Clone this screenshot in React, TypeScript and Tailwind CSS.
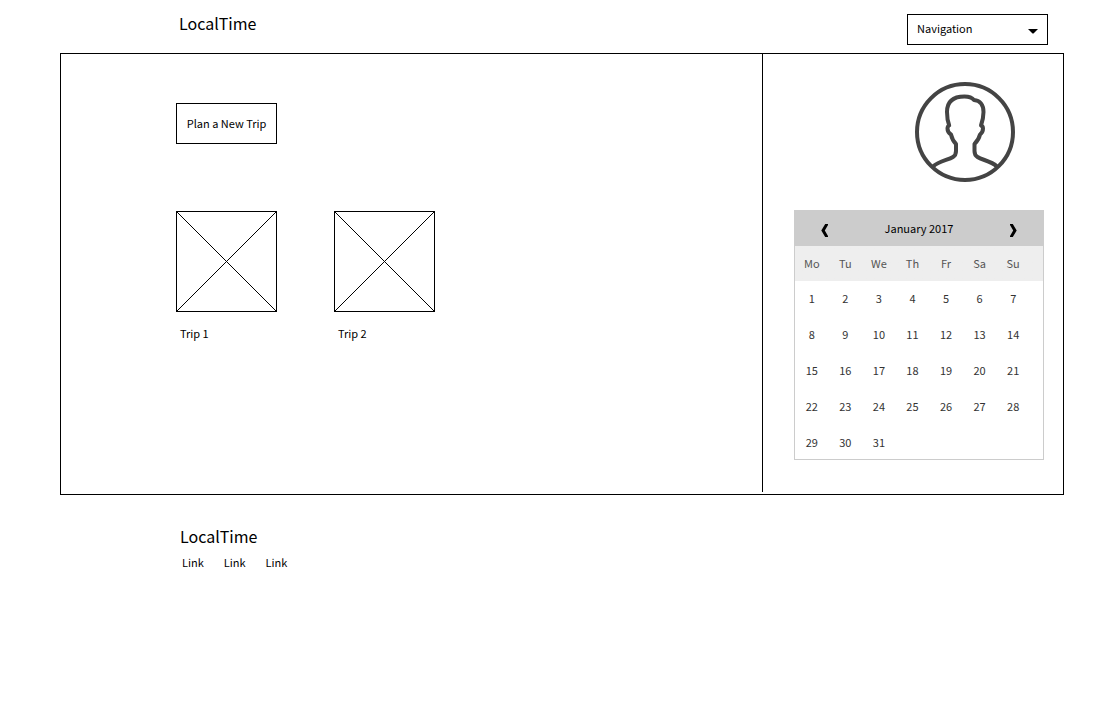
import React from "react";

const weekdays = ["Mo", "Tu", "We", "Th", "Fr", "Sa", "Su"];
const weeks = [0, 1, 2, 3, 4].map((w) =>
  weekdays.map((_, d) => w * 7 + d + 1).map((n) => (n <= 31 ? n : null)),
);

function Trip({ name }: { name: string }) {
  return (
    <figure>
      <svg
        className="size-[101px] border border-black"
        viewBox="0 0 99 99"
        fill="none"
        stroke="#000"
        shapeRendering="crispEdges"
        role="img"
        aria-label={name}
      >
        <path d="M0 0L99 99M99 0L0 99" />
      </svg>
      <figcaption className="mt-[11px] pl-1 leading-5">{name}</figcaption>
    </figure>
  );
}

function Avatar() {
  return (
    <svg
      className="mr-12 size-[100px] self-end"
      viewBox="0 0 100 100"
      fill="none"
      stroke="#444"
      strokeWidth="4"
      strokeLinejoin="round"
      role="img"
      aria-label="Profile"
    >
      <circle cx="50" cy="50" r="48" />
      <path d="M18 84.500C24 79 33 78 38 75C40.500 73.500 41 71 41 69V62C38.500 59.500 37 57 36 52.500C33.500 51 32.500 49 32.500 46.500C32.500 45 33 44 34.200 43.500C32.500 39 32 34 32 30C32 19 39 14.500 49.500 14.500C54 14.500 57 15.500 59 18C65 18.500 68.500 23 68.500 30C68.500 34 67.500 39 66 43.500C67.500 44 68 45 68 46.500C68 49 67 51 65 52.500C64 57 62 59.500 59.500 62V69C59.500 71 60 73.500 62.500 75C67 78 76 79 82 84.500" />
    </svg>
  );
}

function Calendar() {
  return (
    <section
      aria-label="Calendar"
      className="mt-7 ml-[31px] h-[250px] w-[250px] border border-[#ccc] text-[#333]"
    >
      <header className="flex h-[35px] items-center justify-between bg-[#ccc] px-6 text-black">
        <button aria-label="Previous month" className="flex h-6 w-3 items-end justify-center pb-1">
          <svg className="h-[13px] w-2" viewBox="0 0 8 13" aria-hidden="true">
            <path d="M4.200 0H7V1L3.800 6.500L7 12V13H4.200L.3 6.500Z" />
          </svg>
        </button>
        <h2 className="pb-0.5">January 2017</h2>
        <button aria-label="Next month" className="flex h-6 w-3 items-end justify-center pb-1">
          <svg className="h-[13px] w-2" viewBox="0 0 8 13" aria-hidden="true">
            <path d="M3.800 0H1V1L4.200 6.500L1 12V13H3.800L7.700 6.500Z" />
          </svg>
        </button>
      </header>
      <div className="bg-linear-to-b from-[#eee] from-[35px] to-transparent to-[35px] pr-[13px]">
        <table className="w-full table-fixed border-collapse text-center">
          <thead>
            <tr className="h-[35px] text-[#555]">
              {weekdays.map((d) => (
                <th key={d} scope="col" className="p-0 pb-0.5 font-normal">
                  {d}
                </th>
              ))}
            </tr>
          </thead>
          <tbody>
            {weeks.map((week, i) => (
              <tr key={i} className="h-9">
                {week.map((n, j) => (
                  <td key={j} className="p-0 pb-0.5">
                    {n}
                  </td>
                ))}
              </tr>
            ))}
          </tbody>
        </table>
      </div>
    </section>
  );
}

export default function App() {
  return (
    <div className="min-h-screen bg-white pr-[50px] pl-[60px] font-['Noto_Sans_CJK_SC','Noto_Sans',sans-serif] text-[11px] leading-5 text-black">
      <header className="flex h-[53px] items-start justify-between pr-4 pl-[119px]">
        <h1 className="mt-[11px] text-[16px] leading-6">LocalTime</h1>
        <div className="relative mt-[14px]">
          <select
            aria-label="Navigation"
            className="h-[31px] w-[141px] appearance-none border border-black bg-white pr-6 pb-[3px] pl-[9px]"
          >
            <option>Navigation</option>
          </select>
          <svg
            className="pointer-events-none absolute top-[15px] right-[10px] h-[5px] w-[10px]"
            viewBox="0 0 10 5"
            aria-hidden="true"
          >
            <path d="M0 0H10L5.500 4.500H4.500Z" />
          </svg>
        </div>
      </header>

      <div className="flex border border-black pb-0.5">
        <main className="flex-1 pt-[49px] pl-[115px]">
          <button className="h-[41px] w-[101px] border border-black pb-0.5">Plan a New Trip</button>
          <div className="mt-[67px] flex gap-[57px]">
            <Trip name="Trip 1" />
            <Trip name="Trip 2" />
          </div>
        </main>
        <aside className="flex w-[301px] flex-col border-l border-black pt-7 pb-8">
          <Avatar />
          <Calendar />
        </aside>
      </div>

      <footer className="pt-[29px] pl-[120px]">
        <p className="text-[16px] leading-6">LocalTime</p>
        <nav aria-label="Footer" className="mt-1 flex gap-5 pl-0.5">
          <a href="#one">Link</a>
          <a href="#two">Link</a>
          <a href="#three">Link</a>
        </nav>
      </footer>
    </div>
  );
}
